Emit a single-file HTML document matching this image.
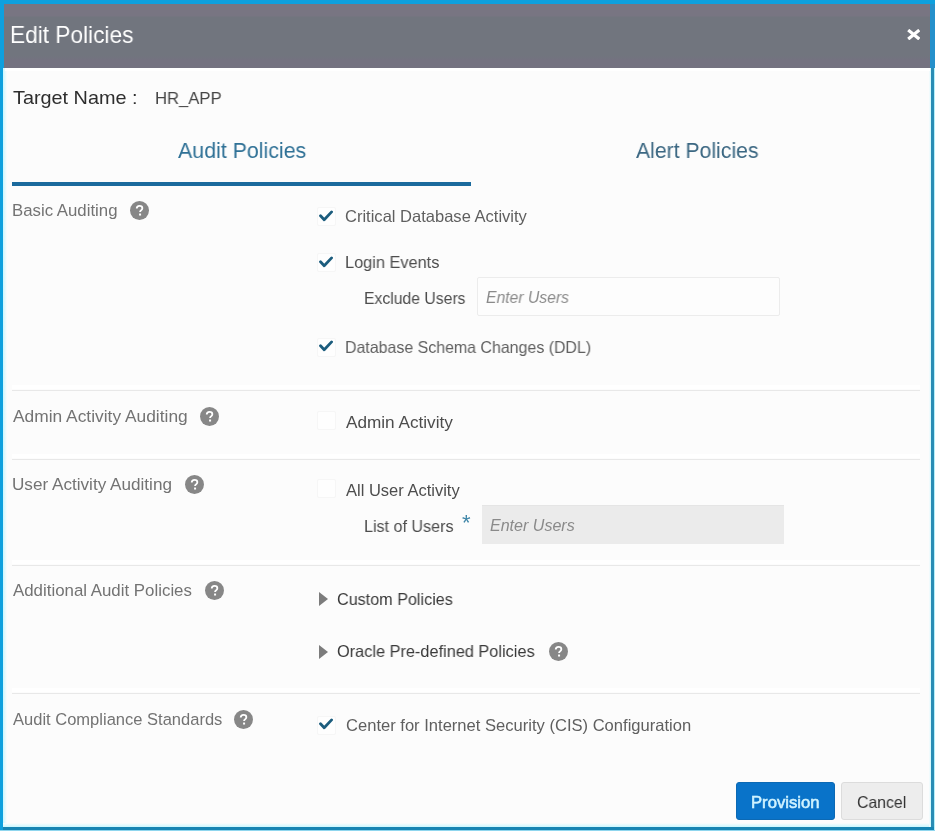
<!DOCTYPE html>
<html lang="en">
<head>
<meta charset="utf-8">
<title>Edit Policies</title>
<style>
html,body{margin:0;padding:0;}
body{width:935px;height:831px;position:relative;overflow:hidden;background:#fcfcfc;font-family:"Liberation Sans",sans-serif;}
#frame{position:absolute;left:0;top:0;width:935px;height:831px;background:#0ea0de;}
#dialog{position:absolute;left:3px;top:68px;width:928px;height:759px;background:#fcfcfc;}
#header{position:absolute;left:3.6px;top:3.6px;width:926px;height:64.2px;background:linear-gradient(#787582 0,#787582 12px,#71757e 13px,#71757e 52px,#747280 56px,#747280 100%);}
#hwhite{position:absolute;left:5px;top:68px;width:925px;height:3px;background:#ffffff;}
.t{position:absolute;white-space:nowrap;transform-origin:0 0;display:block;will-change:transform;}
.help,.chk,.cb{position:absolute;display:block;}
.help svg{display:block;}
.cb{box-sizing:border-box;border:1px solid #f6f6f6;background:#fefefe;border-radius:2px;}
.sep{position:absolute;left:12px;width:908px;height:1.4px;background:#e8e8e8;}
.sepw{position:absolute;left:12px;width:908px;height:4px;background:#ffffff;}
#tabline{position:absolute;left:12px;top:182px;width:459px;height:4px;background:#1b6a9d;}
.inp{position:absolute;box-sizing:border-box;}
#inp1{left:477.3px;top:277.1px;width:302.7px;height:39.4px;border:1px solid #ececec;background:#fdfdfd;border-radius:2px;}
#inp2{left:482px;top:505px;width:302px;height:39px;background:#ebebeb;border-top:1px solid #e5e5e5;}
.btn{position:absolute;box-sizing:border-box;top:782px;height:37.5px;border-radius:3px;}
#bprov{left:736px;width:98.5px;background:#0973c9;border:1px solid #0c69b4;}
#bcanc{left:841px;width:82px;background:#ededed;border:1px solid #dcdcdc;}
#close{position:absolute;left:906.6px;top:29.4px;}
#edgeRh{position:absolute;left:929.6px;top:4px;width:5.4px;height:64px;background:#2590cb;}
#edgeR{position:absolute;left:931px;top:68px;width:3px;height:759px;background:#2a8db5;}
#edgeR2{position:absolute;left:934px;top:68px;width:1px;height:763px;background:#b5f0fb;}
#edgeRw{position:absolute;left:929px;top:68px;width:2px;height:759px;background:linear-gradient(to left,#cdf8ff,#fcfcfc);}
#edgeB{position:absolute;left:3px;top:827px;width:931px;height:3px;background:#1785b3;}
#edgeB2{position:absolute;left:0;top:830px;width:935px;height:1px;background:#8fd6ee;}
#edgeLw{position:absolute;left:3px;top:68px;width:4px;height:759px;background:linear-gradient(to right,#c9f7ff,#fcfcfc);}
#edgeBw{position:absolute;left:3px;top:823px;width:928px;height:4px;background:linear-gradient(to top,#c9f7ff,#fcfcfc);}
</style>
</head>
<body>
<div id="frame"></div>
<div id="dialog"></div>
<div id="edgeLw"></div><div id="edgeBw"></div><div id="edgeRw"></div>
<div id="edgeRh"></div><div id="edgeR"></div><div id="edgeR2"></div><div id="edgeB"></div><div id="edgeB2"></div>
<div id="header"></div><div id="hwhite"></div>
<svg id="close" width="13.5" height="11" viewBox="0 0 13.5 11"><path d="M1.2 1.1 L12.3 10.1 M12.3 1.1 L1.2 10.1" stroke="#fff" stroke-width="3.2" fill="none"/></svg>
<div id="tabline"></div>
<div class="sepw" style="top:385px"></div><div class="sep" style="top:390px"></div>
<div class="sepw" style="top:454px"></div><div class="sep" style="top:459px"></div>
<div class="sepw" style="top:560px"></div><div class="sep" style="top:565px"></div>
<div class="sepw" style="top:688px"></div><div class="sep" style="top:693px"></div>
<div class="inp" id="inp1"></div>
<div class="inp" id="inp2"></div>
<div class="btn" id="bprov"></div>
<div class="btn" id="bcanc"></div>
<span class="help" style="left:129.7px;top:200.5px;width:19px;height:19px;"><svg viewBox="0 0 20 20" width="19" height="19"><circle cx="10" cy="10" r="10" fill="#878787"/><path d="M7.1 7.9c0-1.7 1.3-2.8 3-2.8 1.7 0 2.9 1 2.9 2.5 0 1.2-.7 1.8-1.5 2.4-.7.5-.9.8-.9 1.6" fill="none" stroke="#fff" stroke-width="1.9" stroke-linecap="butt"/><rect x="9.55" y="13.2" width="2.1" height="2.1" fill="#fff"/></svg></span>
<span class="help" style="left:200.3px;top:406.8px;width:19px;height:19px;"><svg viewBox="0 0 20 20" width="19" height="19"><circle cx="10" cy="10" r="10" fill="#878787"/><path d="M7.1 7.9c0-1.7 1.3-2.8 3-2.8 1.7 0 2.9 1 2.9 2.5 0 1.2-.7 1.8-1.5 2.4-.7.5-.9.8-.9 1.6" fill="none" stroke="#fff" stroke-width="1.9" stroke-linecap="butt"/><rect x="9.55" y="13.2" width="2.1" height="2.1" fill="#fff"/></svg></span>
<span class="help" style="left:184.9px;top:474.6px;width:19px;height:19px;"><svg viewBox="0 0 20 20" width="19" height="19"><circle cx="10" cy="10" r="10" fill="#878787"/><path d="M7.1 7.9c0-1.7 1.3-2.8 3-2.8 1.7 0 2.9 1 2.9 2.5 0 1.2-.7 1.8-1.5 2.4-.7.5-.9.8-.9 1.6" fill="none" stroke="#fff" stroke-width="1.9" stroke-linecap="butt"/><rect x="9.55" y="13.2" width="2.1" height="2.1" fill="#fff"/></svg></span>
<span class="help" style="left:204.7px;top:580.7px;width:19px;height:19px;"><svg viewBox="0 0 20 20" width="19" height="19"><circle cx="10" cy="10" r="10" fill="#878787"/><path d="M7.1 7.9c0-1.7 1.3-2.8 3-2.8 1.7 0 2.9 1 2.9 2.5 0 1.2-.7 1.8-1.5 2.4-.7.5-.9.8-.9 1.6" fill="none" stroke="#fff" stroke-width="1.9" stroke-linecap="butt"/><rect x="9.55" y="13.2" width="2.1" height="2.1" fill="#fff"/></svg></span>
<span class="help" style="left:549.1px;top:641.5px;width:19px;height:19px;"><svg viewBox="0 0 20 20" width="19" height="19"><circle cx="10" cy="10" r="10" fill="#878787"/><path d="M7.1 7.9c0-1.7 1.3-2.8 3-2.8 1.7 0 2.9 1 2.9 2.5 0 1.2-.7 1.8-1.5 2.4-.7.5-.9.8-.9 1.6" fill="none" stroke="#fff" stroke-width="1.9" stroke-linecap="butt"/><rect x="9.55" y="13.2" width="2.1" height="2.1" fill="#fff"/></svg></span>
<span class="help" style="left:234.3px;top:709.6px;width:19px;height:19px;"><svg viewBox="0 0 20 20" width="19" height="19"><circle cx="10" cy="10" r="10" fill="#878787"/><path d="M7.1 7.9c0-1.7 1.3-2.8 3-2.8 1.7 0 2.9 1 2.9 2.5 0 1.2-.7 1.8-1.5 2.4-.7.5-.9.8-.9 1.6" fill="none" stroke="#fff" stroke-width="1.9" stroke-linecap="butt"/><rect x="9.55" y="13.2" width="2.1" height="2.1" fill="#fff"/></svg></span>
<span class="cb" style="left:317px;top:207px;width:19px;height:19px"></span>
<span class="cb" style="left:317px;top:253px;width:19px;height:19px"></span>
<span class="cb" style="left:317px;top:338px;width:19px;height:19px"></span>
<span class="cb" style="left:317px;top:411px;width:19px;height:19px"></span>
<span class="cb" style="left:317px;top:479px;width:19px;height:19px"></span>
<span class="cb" style="left:317px;top:716px;width:19px;height:19px"></span>
<svg class="chk" style="left:318.9px;top:210.3px" width="14.5" height="12" viewBox="0 0 14.5 12"><path d="M1.5 5.7 L5.2 9.7 L12.6 1.9" fill="none" stroke="#1b5c7d" stroke-width="2.8" stroke-linecap="round" stroke-linejoin="round"/></svg>
<svg class="chk" style="left:318.9px;top:256.3px" width="14.5" height="12" viewBox="0 0 14.5 12"><path d="M1.5 5.7 L5.2 9.7 L12.6 1.9" fill="none" stroke="#1b5c7d" stroke-width="2.8" stroke-linecap="round" stroke-linejoin="round"/></svg>
<svg class="chk" style="left:318.9px;top:340.4px" width="14.5" height="12" viewBox="0 0 14.5 12"><path d="M1.5 5.7 L5.2 9.7 L12.6 1.9" fill="none" stroke="#1b5c7d" stroke-width="2.8" stroke-linecap="round" stroke-linejoin="round"/></svg>
<svg class="chk" style="left:318.9px;top:718.2px" width="14.5" height="12" viewBox="0 0 14.5 12"><path d="M1.5 5.7 L5.2 9.7 L12.6 1.9" fill="none" stroke="#1b5c7d" stroke-width="2.8" stroke-linecap="round" stroke-linejoin="round"/></svg>
<svg class="chk" style="left:319.4px;top:592px" width="9" height="14" viewBox="0 0 9 14"><path d="M0 0 L9 7.0 L0 14 Z" fill="#7c7c7c"/></svg>
<svg class="chk" style="left:319.4px;top:644.5px" width="9" height="14" viewBox="0 0 9 14"><path d="M0 0 L9 7.0 L0 14 Z" fill="#7c7c7c"/></svg>
<span class="t" id="t_star" style="left:461.5px;top:511.7px;font-size:22px;line-height:22px;color:#3f86a8;">*</span>
<span class="t" id="t_title" style="left:10.15px;top:22.67px;font-size:23.9px;line-height:23.9px;color:#ffffff;transform:scaleX(0.9483);">Edit Policies</span>
<span class="t" id="t_tn" style="left:12.80px;top:88.42px;font-size:19px;line-height:19px;color:#2e2e2e;transform:scaleX(1.0437);">Target Name :</span>
<span class="t" id="t_hr" style="left:155.02px;top:90.11px;font-size:17px;line-height:17px;color:#454545;transform:scaleX(0.9792);">HR_APP</span>
<span class="t" id="t_audit" style="left:177.70px;top:139.61px;font-size:22.2px;line-height:22.2px;color:#2f7196;transform:scaleX(0.9632);">Audit Policies</span>
<span class="t" id="t_alert" style="left:636.40px;top:139.61px;font-size:22.2px;line-height:22.2px;color:#3b6782;transform:scaleX(0.9552);">Alert Policies</span>
<span class="t" id="t_basic" style="left:12.27px;top:201.90px;font-size:16.3px;line-height:16.3px;color:#737373;transform:scaleX(1.0315);">Basic Auditing</span>
<span class="t" id="t_crit" style="left:345.30px;top:208.03px;font-size:16.5px;line-height:16.5px;color:#5f5f5f;transform:scaleX(1.0015);">Critical Database Activity</span>
<span class="t" id="t_login" style="left:344.51px;top:253.93px;font-size:16.5px;line-height:16.5px;color:#4d4d4d;transform:scaleX(0.9889);">Login Events</span>
<span class="t" id="t_excl" style="left:363.75px;top:289.63px;font-size:16.5px;line-height:16.5px;color:#4d4d4d;transform:scaleX(0.9541);">Exclude Users</span>
<span class="t" id="t_ph1" style="left:486.40px;top:290.36px;font-size:16px;line-height:16px;color:#8a8a8a;font-style:italic;transform:scaleX(0.9814);">Enter Users</span>
<span class="t" id="t_ddl" style="left:345.23px;top:339.03px;font-size:16.5px;line-height:16.5px;color:#5f5f5f;transform:scaleX(0.9654);">Database Schema Changes (DDL)</span>
<span class="t" id="t_admin" style="left:13.30px;top:408.20px;font-size:16.3px;line-height:16.3px;color:#737373;transform:scaleX(1.0666);">Admin Activity Auditing</span>
<span class="t" id="t_admact" style="left:345.70px;top:413.93px;font-size:16.5px;line-height:16.5px;color:#4d4d4d;transform:scaleX(1.0406);">Admin Activity</span>
<span class="t" id="t_user" style="left:12.25px;top:476.00px;font-size:16.3px;line-height:16.3px;color:#737373;transform:scaleX(1.0523);">User Activity Auditing</span>
<span class="t" id="t_allu" style="left:346.20px;top:482.03px;font-size:16.5px;line-height:16.5px;color:#4d4d4d;transform:scaleX(0.9987);">All User Activity</span>
<span class="t" id="t_list" style="left:364.02px;top:517.63px;font-size:16.5px;line-height:16.5px;color:#4d4d4d;transform:scaleX(0.9763);">List of Users</span>
<span class="t" id="t_ph2" style="left:489.70px;top:518.46px;font-size:16px;line-height:16px;color:#8a8a8a;font-style:italic;transform:scaleX(1.0027);">Enter Users</span>
<span class="t" id="t_addl" style="left:13.30px;top:582.20px;font-size:16.3px;line-height:16.3px;color:#737373;transform:scaleX(1.0350);">Additional Audit Policies</span>
<span class="t" id="t_cust" style="left:336.90px;top:590.53px;font-size:16.5px;line-height:16.5px;color:#3a3a3a;transform:scaleX(0.9793);">Custom Policies</span>
<span class="t" id="t_orcl" style="left:337.00px;top:643.13px;font-size:16.5px;line-height:16.5px;color:#3a3a3a;transform:scaleX(0.9886);">Oracle Pre-defined Policies</span>
<span class="t" id="t_comp" style="left:12.80px;top:711.10px;font-size:16.3px;line-height:16.3px;color:#737373;transform:scaleX(1.0145);">Audit Compliance Standards</span>
<span class="t" id="t_cis" style="left:345.80px;top:716.83px;font-size:16.5px;line-height:16.5px;color:#5f5f5f;transform:scaleX(1.0037);">Center for Internet Security (CIS) Configuration</span>
<span class="t" id="t_prov" style="left:751.29px;top:793.73px;font-size:16.5px;line-height:16.5px;color:#d0f3ff;-webkit-text-stroke:0.55px #d0f3ff;transform:scaleX(1.0092);">Provision</span>
<span class="t" id="t_canc" style="left:856.90px;top:793.73px;font-size:16.5px;line-height:16.5px;color:#333333;transform:scaleX(0.9587);">Cancel</span>
</body>
</html>
